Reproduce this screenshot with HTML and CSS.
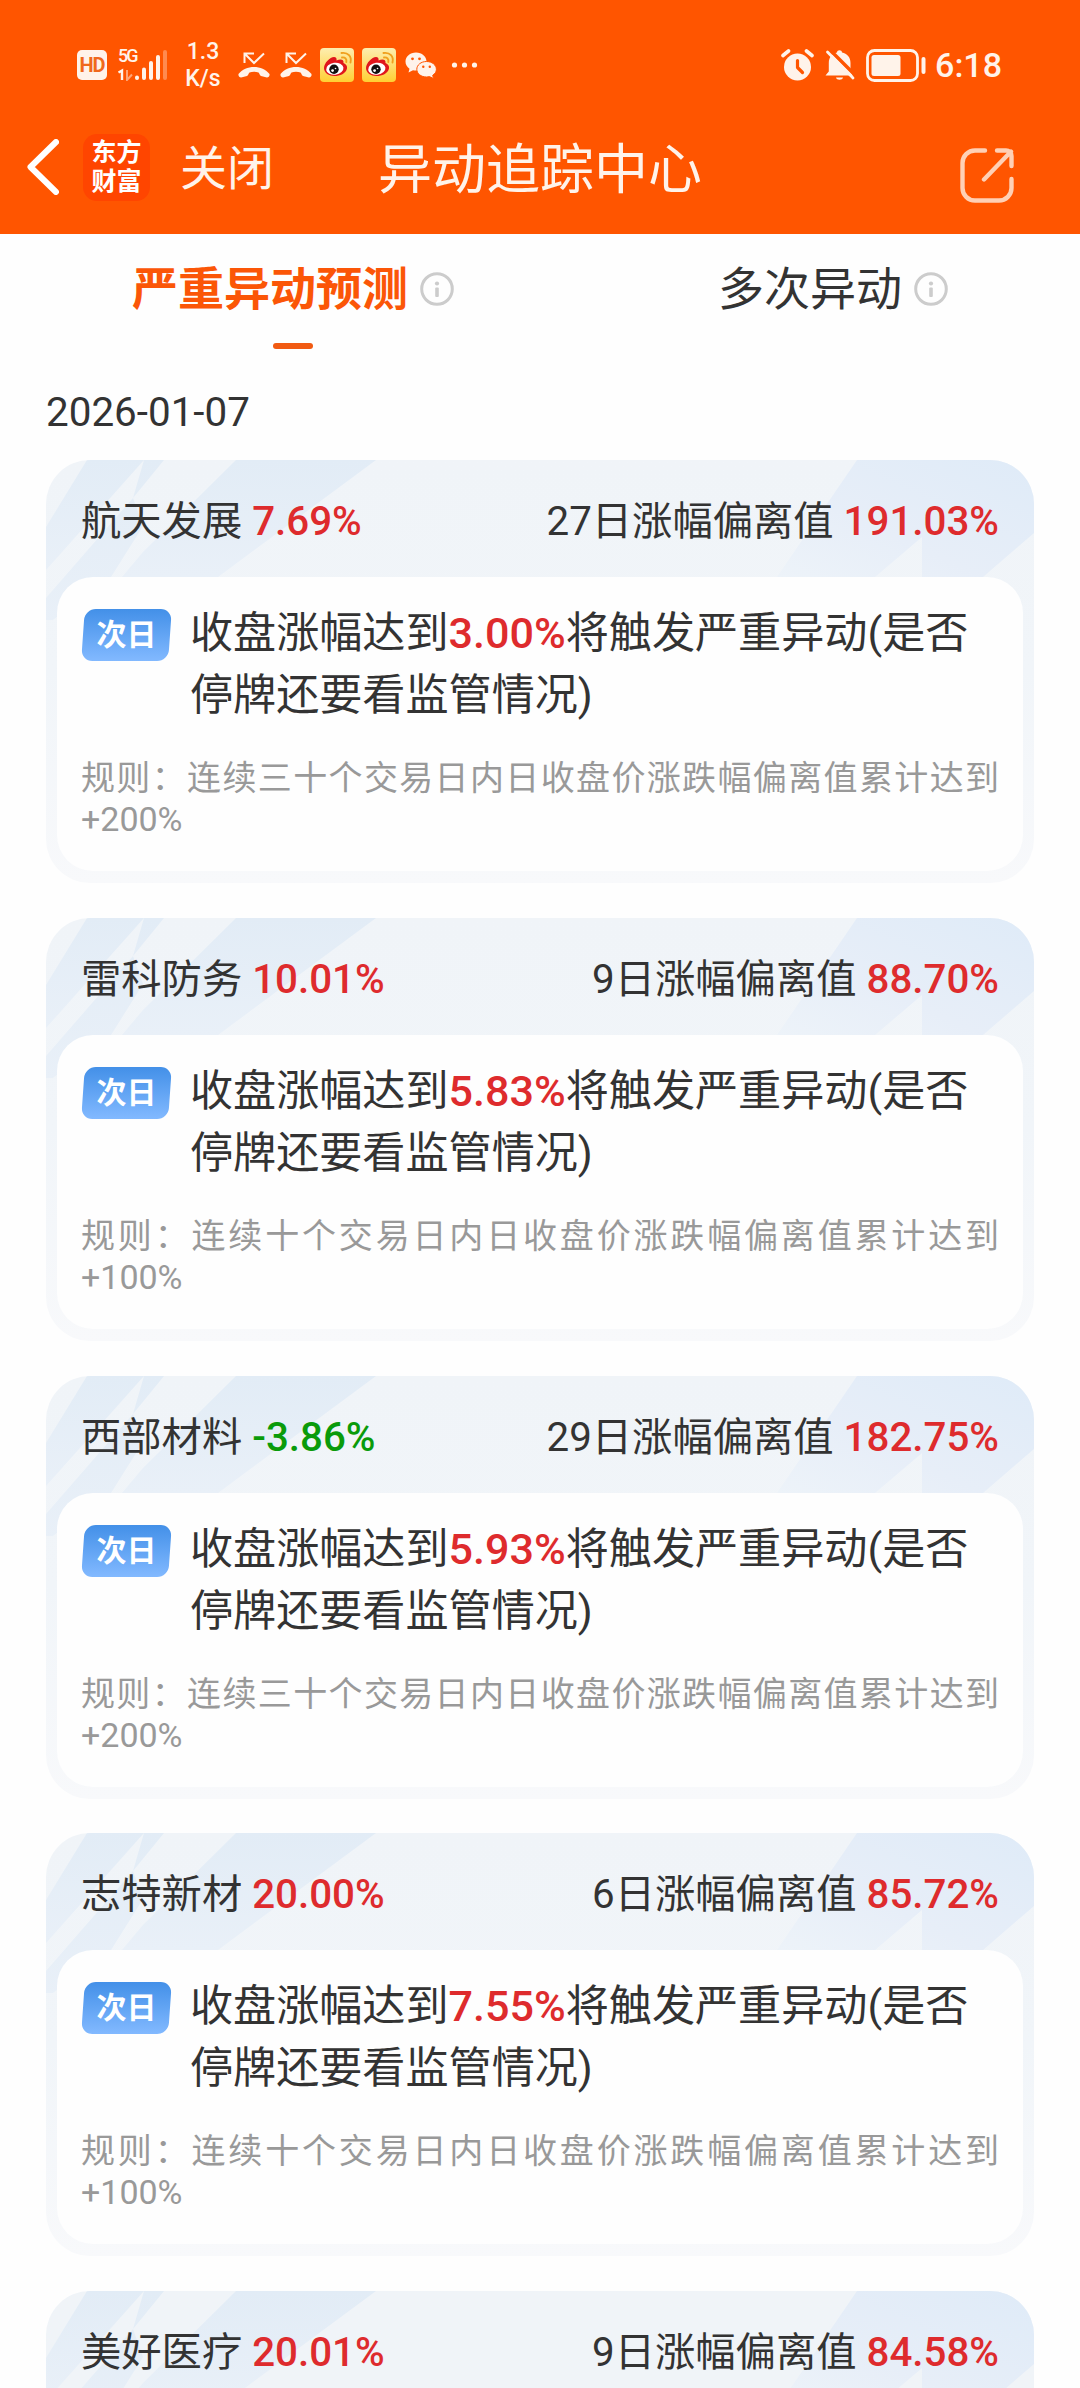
FILE: index.html
```html
<!DOCTYPE html>
<html lang="zh-CN">
<head>
    <meta charset="UTF-8">
    <meta name="viewport" content="width=device-width, initial-scale=1.0">
    <title>异动追踪中心</title>
    <link rel="stylesheet" href="styles.css">
</head>
<body>
    <!-- shared shapes -->
    <svg class="defs" width="0" height="0">
        <defs>
            <linearGradient id="stripeLeft" x1="0" y1="0" x2="0" y2="1">
                <stop offset="0" stop-color="#e2ecf6"/>
                <stop offset="1" stop-color="#e9f0f8"/>
            </linearGradient>
            <linearGradient id="stripeRight" x1="1" y1="0" x2="0" y2="1">
                <stop offset="0" stop-color="#dfebf8"/>
                <stop offset="0.6" stop-color="#e7eef8"/>
                <stop offset="1" stop-color="#edf3f9"/>
            </linearGradient>
            <linearGradient id="weiboBg" x1="0" y1="0" x2="0" y2="1">
                <stop offset="0" stop-color="#fdeeb0"/>
                <stop offset="1" stop-color="#ffcf33"/>
            </linearGradient>
        </defs>
        <symbol id="stripes" viewBox="0 0 988 160">
            <path fill="url(#stripeLeft)" d="M41 0H98L0 110V67Z"/>
            <path fill="url(#stripeLeft)" d="M98 0H118L87 38L97 66L65 117L0 165V138L87 38Z"/>
            <path fill="url(#stripeLeft)" d="M190 0H330L172 117H76L97 92Z"/>
            <path fill="url(#stripeRight)" d="M811 0H988V73L937 117H876V77L829 117H731Z"/>
        </symbol>
        <symbol id="missed" viewBox="0 0 32 26">
            <path d="M6.500 11V1.500H16M6.500 1.500L16 11L26 1.500" fill="none" stroke="#fff3ea" stroke-width="2"/>
            <path d="M0.500 22C4 17.500 10 15 16 15S28 17.500 31.500 22C32 24 30.500 25.500 29 25.500L23 24C21.500 23.500 21.500 21 20.500 20.500C18 19.500 14 19.500 11.500 20.500C10.500 21 10.500 23.500 9 24L3 25.500C1.500 25.500 0 24 0.500 22Z" fill="#fff3ea"/>
        </symbol>
        <symbol id="weibo" viewBox="0 0 34 34">
            <rect width="34" height="34" rx="4" fill="url(#weiboBg)"/>
            <path d="M4 20C4 15 10 9 14 9C16 9 17 10.500 16.500 12.500C20 11 24 11 23.500 15C26 16 27.500 18 27 20.500C26 25.500 20 28 14.500 28C9 28 4 25 4 20Z" fill="#e0161c"/>
            <ellipse cx="14.800" cy="20.700" rx="8.700" ry="6" fill="#fff" transform="rotate(-8 14.800 20.700)"/>
            <circle cx="14" cy="21.300" r="4.700" fill="#111"/>
            <circle cx="12.600" cy="22.600" r="1.400" fill="#fff"/>
            <circle cx="15.500" cy="20.500" r="0.800" fill="#fff"/>
            <path d="M22 9.500C25 9 27 11 26.300 14M21.500 5C28 4 32 8.500 30.500 14.500" fill="none" stroke="#f0a01e" stroke-width="1.900" stroke-linecap="round"/>
        </symbol>
        <symbol id="info" viewBox="0 0 34 34">
            <circle cx="17" cy="17" r="15.300" fill="none" stroke="#ccc" stroke-width="3"/>
            <circle cx="17" cy="11.500" r="2.100" fill="#ccc"/>
            <rect x="15.200" y="15.500" width="3.600" height="9.500" rx="1" fill="#ccc"/>
        </symbol>
    </svg>

    <header class="header">
        <div class="status-bar">
            <span class="hd">HD</span>
            <div class="signal">
                <span class="signal-5g">5G</span>
                <svg width="50" height="32" viewBox="0 0 50 32">
                    <path d="M0.500 23.500L4 21.500V31" fill="none" stroke="#fff3ea" stroke-width="2.400"/>
                    <path d="M9 21V31L14 25.500" fill="none" stroke="#ffa577" stroke-width="2"/>
                    <g fill="#fff3ea">
                        <rect x="17" y="26.500" width="4" height="4.500" rx="2"/>
                        <rect x="24" y="18.500" width="4" height="12.500" rx="2"/>
                        <rect x="31" y="12" width="4" height="19" rx="2"/>
                        <rect x="38" y="6" width="4" height="25" rx="2"/>
                    </g>
                    <rect x="45" y="1" width="4" height="30" rx="2" fill="#ff8a50"/>
                </svg>
            </div>
            <div class="speed">1.3<br>K/s</div>
            <svg class="missed" width="32" height="26"><use href="#missed"/></svg>
            <svg class="missed" width="32" height="26"><use href="#missed"/></svg>
            <svg class="weibo" width="34" height="34"><use href="#weibo"/></svg>
            <svg class="weibo" width="34" height="34"><use href="#weibo"/></svg>
            <svg class="wechat" width="32" height="27" viewBox="0 0 32 27">
                <path d="M11 0.500C5 0.500 0.500 4.500 0.500 9.500C0.500 12.500 2 15 4.500 16.700L3.500 20.500L8 18.300C9 18.500 10 18.600 11 18.600C17 18.600 21.500 14.500 21.500 9.500S17 0.500 11 0.500Z" fill="#fff3ea"/>
                <path d="M21.500 9.500C16 9.500 11.800 13 11.800 17.300S16 25 21.500 25C22.500 25 23.500 24.900 24.400 24.600L28.500 26.500L27.700 23.300C30 21.900 31.400 19.800 31.400 17.300C31.400 13 27 9.500 21.500 9.500Z" fill="#fff3ea" stroke="#ff5500" stroke-width="1"/>
                <g fill="#ff5500">
                    <circle cx="7.500" cy="6.800" r="1.400"/>
                    <circle cx="14.500" cy="6.800" r="1.400"/>
                    <circle cx="18.300" cy="14.800" r="1.200"/>
                    <circle cx="24.800" cy="14.800" r="1.200"/>
                </g>
            </svg>
            <svg class="more" width="27" height="6" viewBox="0 0 27 6" fill="#fff3ea">
                <circle cx="3.500" cy="3" r="2.600"/>
                <circle cx="13.500" cy="3" r="2.600"/>
                <circle cx="23.500" cy="3" r="2.600"/>
            </svg>

            <svg class="alarm" width="33" height="32" viewBox="0 0 33 32">
                <circle cx="16.500" cy="18" r="13.500" fill="#fff3ea"/>
                <path d="M2 6.500L7.500 2M31 6.500L25.500 2" stroke="#fff3ea" stroke-width="3.600" stroke-linecap="round"/>
                <path d="M16.500 11.500V18.500L21.500 23.500" fill="none" stroke="#ff5500" stroke-width="3.200" stroke-linecap="round" stroke-linejoin="round"/>
            </svg>
            <svg class="bell" width="30" height="32" viewBox="0 0 30 32">
                <path d="M0.500 26.500L3.800 22.500V14C3.800 8 7.500 4.500 12 3.500C12 0.500 17 0.500 17 3.500C22 4.500 25.500 8 25.500 14V22.500L28 26.500Z" fill="#fff3ea"/>
                <path d="M11 28.500H18C17.500 31.500 11.500 31.500 11 28.500Z" fill="#fff3ea"/>
                <path d="M5.500 1.500L30.500 26.500" stroke="#ff5500" stroke-width="3.500"/>
                <path d="M2.500 3L28 29" stroke="#fff3ea" stroke-width="2.800" stroke-linecap="round"/>
            </svg>
            <svg class="battery" width="60" height="33" viewBox="0 0 60 33">
                <rect x="1.500" y="1.500" width="50" height="30" rx="7" fill="none" stroke="#fff3ea" stroke-width="2.800"/>
                <rect x="5.500" y="6" width="29" height="21" rx="2.500" fill="#fff3ea"/>
                <rect x="55.500" y="8" width="4" height="17" rx="2" fill="#fff3ea"/>
            </svg>
            <span class="clock">6:18</span>
        </div>

        <nav class="nav">
            <svg class="back" width="32" height="56" viewBox="0 0 32 56">
                <path d="M29 3L3.500 28L29 53" fill="none" stroke="#fff" stroke-width="6" stroke-linecap="round" stroke-linejoin="round"/>
            </svg>
            <div class="logo">东方<br>财富</div>
            <span class="close">关闭</span>
            <h1 class="title">异动追踪中心</h1>
            <svg class="share" width="54" height="56" viewBox="0 0 54 56">
                <path d="M25 2.500H15A12.500 12.500 0 0 0 2.500 15V40A12.500 12.500 0 0 0 15 52.500H39A12.500 12.500 0 0 0 51.500 40V31M37 2.500H46A5.500 5.500 0 0 1 51.500 8V18M51 3.500L24 31.500" fill="none" stroke="#ffd0b5" stroke-width="4.400" stroke-linecap="round"/>
            </svg>
        </nav>
    </header>

    <div class="tabs">
        <div class="tab active">
            <span>严重异动预测</span>
            <svg width="34" height="34"><use href="#info"/></svg>
        </div>
        <div class="tab">
            <span>多次异动</span>
            <svg width="34" height="34"><use href="#info"/></svg>
        </div>
    </div>

    <main class="list">
        <div class="date">2026-01-07</div>

        <section class="card">
            <svg class="card-bg" width="988" height="160"><use href="#stripes"/></svg>
            <div class="card-head">
                <span>航天发展 <b class="up">7.69%</b></span>
                <span>27日涨幅偏离值 <b class="up">191.03%</b></span>
            </div>
            <div class="card-body">
                <div class="predict">
                    <div class="badge"><span>次日</span></div>
                    <p>收盘涨幅达到<b class="up">3.00%</b>将触发严重异动(是否停牌还要看监管情况)</p>
                </div>
                <p class="rule">规则：连续三十个交易日内日收盘价涨跌幅偏离值累计达到+200%</p>
            </div>
        </section>

        <section class="card">
            <svg class="card-bg" width="988" height="160"><use href="#stripes"/></svg>
            <div class="card-head">
                <span>雷科防务 <b class="up">10.01%</b></span>
                <span>9日涨幅偏离值 <b class="up">88.70%</b></span>
            </div>
            <div class="card-body">
                <div class="predict">
                    <div class="badge"><span>次日</span></div>
                    <p>收盘涨幅达到<b class="up">5.83%</b>将触发严重异动(是否停牌还要看监管情况)</p>
                </div>
                <p class="rule">规则：连续十个交易日内日收盘价涨跌幅偏离值累计达到+100%</p>
            </div>
        </section>

        <section class="card">
            <svg class="card-bg" width="988" height="160"><use href="#stripes"/></svg>
            <div class="card-head">
                <span>西部材料 <b class="down">-3.86%</b></span>
                <span>29日涨幅偏离值 <b class="up">182.75%</b></span>
            </div>
            <div class="card-body">
                <div class="predict">
                    <div class="badge"><span>次日</span></div>
                    <p>收盘涨幅达到<b class="up">5.93%</b>将触发严重异动(是否停牌还要看监管情况)</p>
                </div>
                <p class="rule">规则：连续三十个交易日内日收盘价涨跌幅偏离值累计达到+200%</p>
            </div>
        </section>

        <section class="card">
            <svg class="card-bg" width="988" height="160"><use href="#stripes"/></svg>
            <div class="card-head">
                <span>志特新材 <b class="up">20.00%</b></span>
                <span>6日涨幅偏离值 <b class="up">85.72%</b></span>
            </div>
            <div class="card-body">
                <div class="predict">
                    <div class="badge"><span>次日</span></div>
                    <p>收盘涨幅达到<b class="up">7.55%</b>将触发严重异动(是否停牌还要看监管情况)</p>
                </div>
                <p class="rule">规则：连续十个交易日内日收盘价涨跌幅偏离值累计达到+100%</p>
            </div>
        </section>

        <section class="card">
            <svg class="card-bg" width="988" height="160"><use href="#stripes"/></svg>
            <div class="card-head">
                <span>美好医疗 <b class="up">20.01%</b></span>
                <span>9日涨幅偏离值 <b class="up">84.58%</b></span>
            </div>
        </section>
    </main>
</body>
</html>
```

FILE: styles.css
```css
* {
    margin: 0;
    padding: 0;
    box-sizing: border-box;
}
body {
    width: 1080px;
    height: 2388px;
    background: #fefefe;
    color: #333;
    font-family: Roboto, "Noto Sans CJK SC", sans-serif;
}
svg {
    display: block;
    flex-shrink: 0;
}
.defs {
    position: absolute;
}

/* header */
.header {
    height: 234px;
    background: #ff5500;
    color: #fff3ea;
}
.status-bar {
    display: flex;
    align-items: center;
    height: 120px;
    padding: 10px 78px 0 77px;
}
.hd {
    width: 30px;
    height: 30px;
    border-radius: 5px;
    background: #fff3ea;
    color: #f0681c;
    font-size: 20px;
    font-weight: 700;
    line-height: 31px;
    text-align: center;
    letter-spacing: -1px;
}
.signal {
    position: relative;
    margin-left: 11px;
}
.signal-5g {
    position: absolute;
    top: -2px;
    left: 0;
    font-size: 18px;
    font-weight: 500;
    line-height: 18px;
    letter-spacing: -2px;
}
.speed {
    width: 42px;
    margin: 0 14px 0 14px;
    font-size: 23px;
    font-weight: 500;
    line-height: 27px;
    text-align: center;
}
.missed + .missed {
    margin-left: 10px;
}
.weibo {
    margin-left: 8px;
}
.wechat {
    margin-left: 9px;
}
.more {
    margin-left: 14px;
}
.alarm {
    margin-left: auto;
}
.bell {
    margin-left: 11px;
}
.battery {
    margin-left: 11px;
}
.clock {
    margin-left: 9px;
    font-size: 34px;
    font-weight: 500;
}
.nav {
    position: relative;
    display: flex;
    align-items: center;
    height: 94px;
    padding: 0 66px 0 27px;
}
.logo {
    width: 67px;
    height: 67px;
    margin-left: 24px;
    padding-top: 4px;
    border-radius: 14px;
    background: #ff4500;
    color: #fff;
    font-size: 25px;
    font-weight: 700;
    line-height: 29px;
    text-align: center;
}
.close {
    margin: -5px 0 0 30px;
    font-size: 47px;
}
.title {
    position: absolute;
    top: 12px;
    left: 0;
    right: 0;
    font-size: 54px;
    font-weight: 400;
    line-height: 78px;
    text-align: center;
}
.share {
    margin: 18px 0 0 auto;
}

/* tabs */
.tabs {
    display: flex;
    justify-content: space-between;
    height: 116px;
    padding: 0 132px;
}
.tab {
    display: flex;
    align-items: center;
    gap: 12px;
    position: relative;
    height: 110px;
    font-size: 46px;
    line-height: 110px;
}
.tab.active {
    color: #fb5607;
    font-weight: 700;
}
.tab.active::after {
    content: "";
    position: absolute;
    left: 50%;
    bottom: -5px;
    width: 40px;
    height: 6px;
    margin-left: -20px;
    border-radius: 3px;
    background: #f15a12;
}

/* list */
.list {
    height: 2038px;
    padding: 0 46px;
    overflow: hidden;
}
.date {
    height: 110px;
    font-size: 40.4px;
    line-height: 126px;
}
.card {
    position: relative;
    height: 423px;
    margin-bottom: 34.75px;
    padding: 0 11px 12px;
    border-radius: 44px;
    background: linear-gradient(#f0f4f8, #f1f5f9 50%, #f8f9fb);
    overflow: hidden;
}
.card:last-child {
    height: 97px;
    margin-bottom: 0;
    border-radius: 44px 44px 0 0;
    background: #f0f4f8;
}
.card-bg {
    position: absolute;
    top: 0;
    left: 0;
}
.card-head {
    position: relative;
    display: flex;
    justify-content: space-between;
    height: 117px;
    padding: 3px 24px 0;
    font-size: 40.3px;
    line-height: 117px;
}
.card b {
    font-weight: 500;
}
.up {
    color: #de2b2d;
}
.down {
    color: #0a9b0a;
}
.card-body {
    position: relative;
    height: 294px;
    padding: 26px 24px 0;
    border-radius: 36px;
    background: #fefefe;
}
.predict {
    display: flex;
    font-size: 43.1px;
    line-height: 62px;
}
.badge {
    flex-shrink: 0;
    width: 87px;
    height: 52px;
    margin: 6px 20px 0 2px;
    border-radius: 11px;
    background: linear-gradient(#4390e8, #82b9ff);
    color: #fff;
    font-size: 30px;
    font-weight: 700;
    line-height: 52px;
    text-align: center;
    transform: skewX(-4deg);
}
.badge span {
    display: block;
    transform: skewX(4deg);
}
.rule {
    margin-top: 31px;
    color: #999;
    font-size: 34px;
    line-height: 41px;
    text-align: justify;
}
```
